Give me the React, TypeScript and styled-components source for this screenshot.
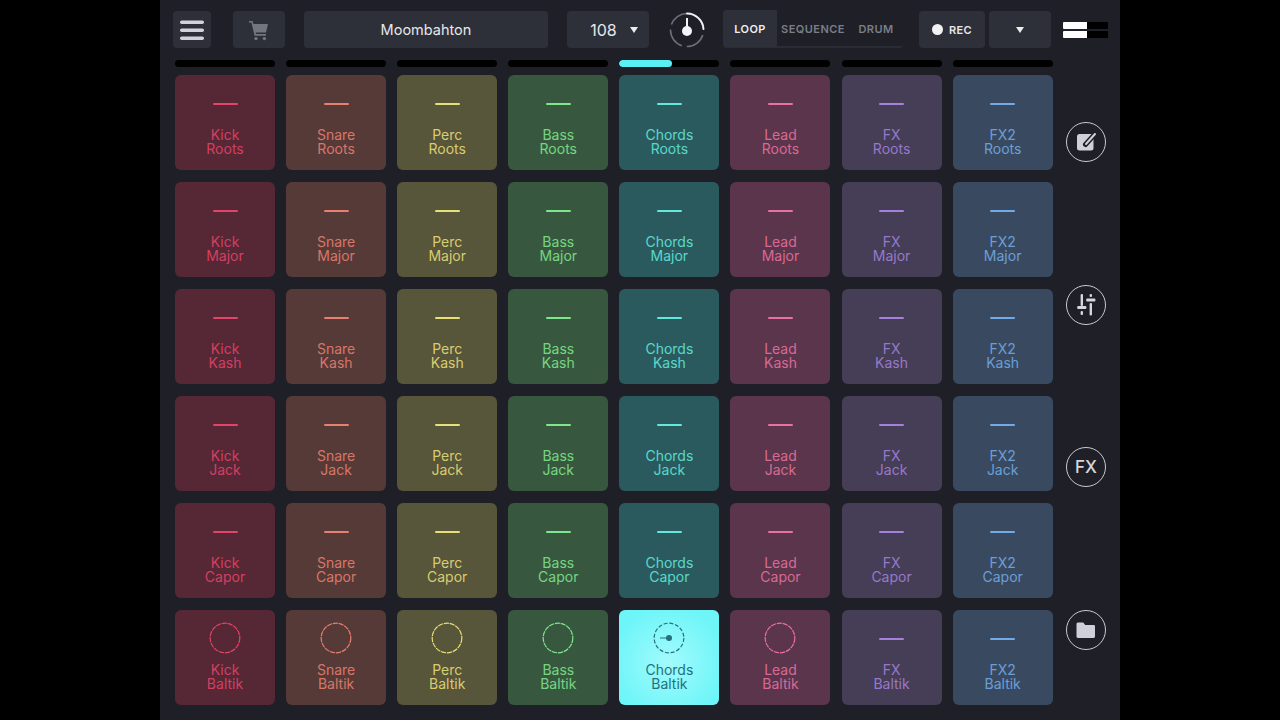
import styled, { createGlobalStyle } from 'styled-components';

const GlobalStyle = createGlobalStyle`
  html, body {
    margin: 0;
    height: 100%;
    background: #000;
  }
  #root {
    height: 100%;
  }
`;

type Track = { name: string; bg: string; fg: string };

const tracks: Track[] = [
  { name: 'Kick', bg: '#562734', fg: '#e2446a' },
  { name: 'Snare', bg: '#553a38', fg: '#e87f70' },
  { name: 'Perc', bg: '#57553a', fg: '#e8df78' },
  { name: 'Bass', bg: '#37583f', fg: '#80e68c' },
  { name: 'Chords', bg: '#2a5a5e', fg: '#62e8dc' },
  { name: 'Lead', bg: '#5a354b', fg: '#e8729f' },
  { name: 'FX', bg: '#453e56', fg: '#a381dc' },
  { name: 'FX2', bg: '#394a60', fg: '#72aae6' },
];

const scenes = ['Roots', 'Major', 'Kash', 'Jack', 'Capor', 'Baltik'];

const Stage = styled.div`
  width: 960px;
  height: 720px;
  margin: 0 auto;
  background: #1f2027;
  font-family: Inter, 'Noto Sans', sans-serif;
  display: flex;
  flex-direction: column;
  overflow: hidden;
`;

const Toolbar = styled.div`
  height: 37px;
  margin-top: 11px;
  padding-left: 13px;
  display: flex;
  align-items: center;
`;

const Block = styled.div<{ $w: number; $ml: number }>`
  width: ${(p) => p.$w}px;
  margin-left: ${(p) => p.$ml}px;
  height: 37px;
  flex: none;
  box-sizing: border-box;
  background: #2e3039;
  border-radius: 4px;
  display: flex;
  align-items: center;
  justify-content: center;
  color: #e6e7ea;
`;

const SongName = styled(Block)`
  font-size: 14.5px;
`;

const Tempo = styled(Block)`
  font-size: 16px;
  gap: 13px;
  padding-left: 12px;
`;

const Caret = styled.span`
  width: 0;
  height: 0;
  border-left: 4.5px solid transparent;
  border-right: 4.5px solid transparent;
  border-top: 6px solid #eceded;
`;

const Knob = styled.svg`
  width: 38px;
  height: 38px;
  margin-left: 19px;
  flex: none;
`;

const Tabs = styled.div`
  width: 180px;
  height: 37px;
  margin-left: 17px;
  flex: none;
  display: flex;
  align-items: center;
  box-sizing: border-box;
  border-bottom: 2px solid #2a2c34;
  border-radius: 0 0 3px 3px;
`;

const Tab = styled.div<{ $active?: boolean; $w: number }>`
  width: ${(p) => p.$w}px;
  height: 37px;
  flex: none;
  display: flex;
  align-items: center;
  justify-content: center;
  font-size: 11px;
  font-weight: 600;
  letter-spacing: 0.45px;
  border-radius: 4px 0 0 4px;
  color: ${(p) => (p.$active ? '#eceef0' : '#7b7e87')};
  background: ${(p) => (p.$active ? '#2e3039' : 'transparent')};
`;

const RecBlock = styled(Block)`
  gap: 6px;
  font-size: 11px;
  font-weight: 600;
  letter-spacing: 0.3px;
`;

const RecDot = styled.span`
  width: 11px;
  height: 11px;
  border-radius: 50%;
  background: #f2f2f4;
`;

const Meter = styled.div`
  width: 45px;
  margin-left: 12px;
  flex: none;
  display: flex;
  flex-direction: column;
  gap: 2px;
`;

const MeterBar = styled.div`
  height: 7px;
  background: linear-gradient(to right, #fff 0 24px, #000 24px);
  border-radius: 1px;
`;

const Main = styled.div`
  display: flex;
  margin-top: 12px;
  padding-left: 15px;
`;

const GridArea = styled.div`
  width: 878px;
  flex: none;
  display: flex;
  flex-direction: column;
`;

const ProgressRow = styled.div`
  display: grid;
  grid-template-columns: repeat(8, 100px);
  column-gap: 11.1px;
  margin-bottom: 8px;
`;

const Progress = styled.div`
  height: 7px;
  border-radius: 4px;
  background: #000;
  overflow: hidden;
`;

const ProgressFill = styled.div`
  height: 100%;
  border-radius: 4px;
  background: #58f0f5;
`;

const PadGrid = styled.div`
  display: grid;
  grid-template-columns: repeat(8, 100px);
  grid-auto-rows: 95px;
  column-gap: 11.1px;
  row-gap: 12px;
`;

const Pad = styled.div<{ $bg: string; $fg: string }>`
  background: ${(p) => p.$bg};
  color: ${(p) => p.$fg};
  border-radius: 6px;
  display: flex;
  flex-direction: column;
  align-items: center;
  font-size: 14px;
  line-height: 14.3px;
  text-align: center;
`;

const ActivePad = styled(Pad)`
  background: radial-gradient(circle at 50% 55%, #a2fbfd 0%, #6df5f8 80%);
`;

const Label = styled.div<{ $dim: boolean }>`
  opacity: ${(p) => (p.$dim ? 0.88 : 1)};
`;

const Dash = styled.div`
  width: 25px;
  height: 2px;
  margin-top: 28px;
  margin-bottom: 23px;
  border-radius: 1px;
  background: currentColor;
`;

const Ring = styled.svg`
  width: 32px;
  height: 32px;
  margin-top: 12px;
  margin-bottom: 9px;
  flex: none;
  display: block;
`;

const Rail = styled.div`
  width: 40px;
  margin-left: 13px;
  padding-top: 62px;
  flex: none;
  display: flex;
  flex-direction: column;
  gap: 122.6px;
`;

const RoundButton = styled.div`
  width: 40px;
  height: 40px;
  box-sizing: border-box;
  border: 1.5px solid #c9cad0;
  border-radius: 50%;
  display: flex;
  align-items: center;
  justify-content: center;
  color: #d6d6dc;
  font-size: 17px;
  font-weight: 500;
`;

const MenuIcon = () => (
  <svg width="26" height="22" viewBox="0 0 26 22">
    <g fill="#d2d3d8">
      <rect x="1" y="1.5" width="24" height="3.5" rx="1.75" />
      <rect x="1" y="9.5" width="24" height="3.5" rx="1.75" />
      <rect x="1" y="17.5" width="24" height="3.5" rx="1.75" />
    </g>
  </svg>
);

const CartIcon = () => (
  <svg width="22" height="22" viewBox="0 0 22 22">
    <g fill="#73767e">
      <path d="M1 2h3.6l.8 3H20l-2 8.5H7.6l.4 1.6h10v1.6H6.6L3.4 3.6H1z" />
      <circle cx="8" cy="19.6" r="1.7" />
      <circle cx="16.4" cy="19.6" r="1.7" />
    </g>
  </svg>
);

const EditIcon = () => (
  <svg width="24" height="24" viewBox="0 0 24 24">
    <rect x="3" y="4" width="16.5" height="16.5" rx="2.5" fill="#d0d0d6" />
    <path d="M11.5 14.5 21 4" stroke="#1f2027" strokeWidth="5" strokeLinecap="round" />
    <path d="M12 14 21 4" stroke="#d0d0d6" strokeWidth="2" strokeLinecap="round" />
  </svg>
);

const MixerIcon = () => (
  <svg width="22" height="24" viewBox="0 0 22 24">
    <g fill="#d6d6dc">
      <rect x="5.6" y="1" width="2.4" height="12" rx="1" />
      <rect x="2.2" y="13" width="9.2" height="3" rx="1" />
      <rect x="5.6" y="18" width="2.4" height="4" rx="1" />
      <rect x="14.6" y="1" width="2.4" height="3" rx="1" />
      <rect x="11.2" y="5.5" width="9.2" height="3" rx="1" />
      <rect x="14.6" y="10" width="2.4" height="12.5" rx="1" />
    </g>
  </svg>
);

const FolderIcon = () => (
  <svg width="20" height="18" viewBox="0 0 20 18">
    <path
      d="M1.8 1.5h5.4l2 2.4h8.9A1.4 1.4 0 0 1 19 5.3v10.2a1.4 1.4 0 0 1-1.4 1.4H1.8A1.4 1.4 0 0 1 .5 15.5V2.9a1.4 1.4 0 0 1 1.3-1.4z"
      fill="#d0d0da"
    />
  </svg>
);

const KnobIcon = () => (
  <Knob viewBox="0 0 38 38">
    <circle cx="19" cy="19" r="16.5" fill="none" stroke="#6d6f76" strokeWidth="1.6" strokeDasharray="21 5" strokeDashoffset="-5" />
    <path d="M19 2.5A16.5 16.5 0 0 1 35.5 18" fill="none" stroke="#f0f0f2" strokeWidth="1.8" strokeLinecap="round" />
    <rect x="18" y="7" width="2" height="12" fill="#f4f4f6" />
    <circle cx="19" cy="20" r="5" fill="#f4f4f6" />
  </Knob>
);

const DashedRing = ({ playing }: { playing?: boolean }) => (
  <Ring viewBox="0 0 32 32">
    <circle cx="16" cy="16" r="14.8" fill="none" stroke="currentColor" strokeWidth="1.2" strokeDasharray={playing ? '4 1.8' : '5.2 0.8'} />
    {playing && (
      <>
        <circle cx="16" cy="16" r="3" fill="currentColor" />
        <path d="M7 16h8" stroke="currentColor" strokeWidth="1" />
      </>
    )}
  </Ring>
);

const PadCell = ({ track, scene }: { track: Track; scene: string }) => {
  const hasClip = scene === 'Baltik' && track.name !== 'FX' && track.name !== 'FX2';
  const playing = scene === 'Baltik' && track.name === 'Chords';
  const Comp = playing ? ActivePad : Pad;
  return (
    <Comp $bg={track.bg} $fg={playing ? '#25707c' : track.fg}>
      {hasClip ? <DashedRing playing={playing} /> : <Dash />}
      <Label $dim={!playing}>
        {track.name}
        <br />
        {scene}
      </Label>
    </Comp>
  );
};

export default function App() {
  return (
    <>
      <GlobalStyle />
      <Stage>
        <Toolbar>
          <Block $w={38} $ml={0}>
            <MenuIcon />
          </Block>
          <Block $w={52} $ml={22}>
            <CartIcon />
          </Block>
          <SongName $w={244} $ml={19}>Moombahton</SongName>
          <Tempo $w={82} $ml={19}>
            108
            <Caret />
          </Tempo>
          <KnobIcon />
          <Tabs>
            <Tab $active $w={54}>LOOP</Tab>
            <Tab $w={72}>SEQUENCE</Tab>
            <Tab $w={54}>DRUM</Tab>
          </Tabs>
          <RecBlock $w={66} $ml={16}>
            <RecDot />
            REC
          </RecBlock>
          <Block $w={62} $ml={4}>
            <Caret />
          </Block>
          <Meter>
            <MeterBar />
            <MeterBar />
          </Meter>
        </Toolbar>
        <Main>
          <GridArea>
            <ProgressRow>
              {tracks.map((t) => (
                <Progress key={t.name}>
                  {t.name === 'Chords' && <ProgressFill style={{ width: '53%' }} />}
                </Progress>
              ))}
            </ProgressRow>
            <PadGrid>
              {scenes.map((s) =>
                tracks.map((t) => <PadCell key={t.name + s} track={t} scene={s} />),
              )}
            </PadGrid>
          </GridArea>
          <Rail>
            <RoundButton>
              <EditIcon />
            </RoundButton>
            <RoundButton>
              <MixerIcon />
            </RoundButton>
            <RoundButton>FX</RoundButton>
            <RoundButton>
              <FolderIcon />
            </RoundButton>
          </Rail>
        </Main>
      </Stage>
    </>
  );
}
